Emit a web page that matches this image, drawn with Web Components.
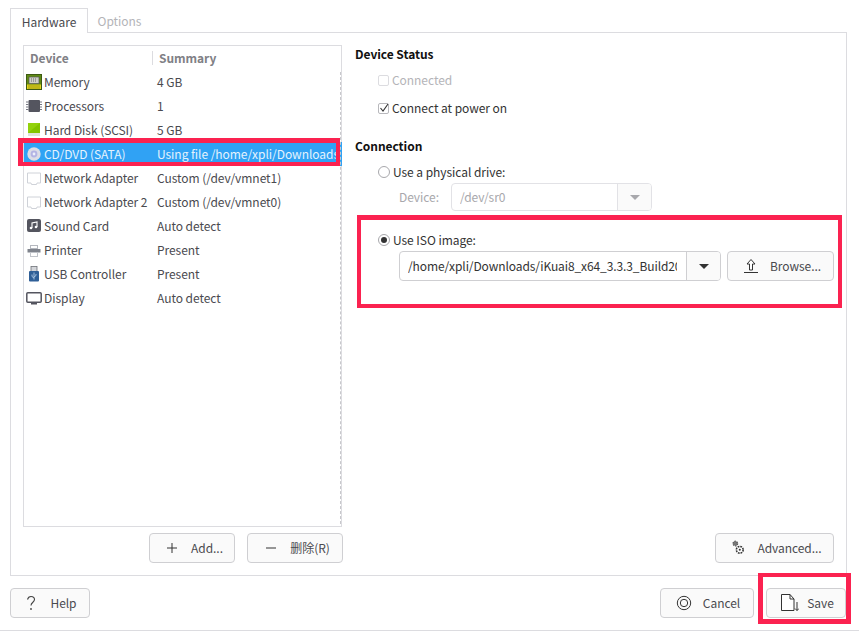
<!DOCTYPE html>
<html>
<head>
<meta charset="utf-8">
<title>Virtual Machine Settings</title>
<style>
  html, body { margin: 0; padding: 0; background: #fff; }
  body { font: 12px/18px "Noto Sans CJK SC", "Noto Sans", sans-serif; letter-spacing: -0.05px; color: #4a4a4f; }
</style>
</head>
<body>
<template id="icons">
  <svg data-i="memory" viewBox="0 0 16 16"><rect x=".5" y=".5" width="15" height="15" fill="#5f8a14" stroke="#3d5a12"/><rect x="1" y="10.500" width="14" height="4.500" fill="#e3d51c"/><path d="M3 10.500v4.500M5 10.500v4.500M7 10.500v4.500M9 10.500v4.500M11 10.500v4.500M13 10.500v4.500" stroke="#8c8a12" stroke-width=".8"/><rect x="3" y="3" width="10" height="6.500" fill="#cfcfc8" stroke="#555" stroke-width=".7"/><path d="M5 5h6M5 7h6" stroke="#666" stroke-dasharray="1 1"/></svg>
  <svg data-i="cpu" viewBox="0 0 16 16"><rect x="2.500" y="2" width="11.500" height="12" rx="1" fill="#54555f"/><path d="M0 4h2.500M0 6.500h2.500M0 9h2.500M0 11.500h2.500M14 4h2M14 6.500h2M14 9h2M14 11.500h2" stroke="#777882"/></svg>
  <svg data-i="disk" viewBox="0 0 16 16"><rect x="2" y="1" width="12" height="10" fill="#83c400"/><path d="M2 1h12L2 11z" fill="#93d20c"/><rect x="2" y="11" width="12" height="3" fill="#dfe3dd"/></svg>
  <svg data-i="cd" viewBox="0 0 16 16"><circle cx="8" cy="8" r="6.700" fill="#dcdde6"/><circle cx="8" cy="8" r="3.400" fill="#b4b4e4"/><circle cx="8" cy="8" r="1.400" fill="#eef0fa"/></svg>
  <svg data-i="net" viewBox="0 0 16 16"><path d="M1.500 3h13v10h-3.500l-.5 1.500h-5l-.5-1.500H1.500z" fill="#fff" stroke="#cfd2d8"/></svg>
  <svg data-i="sound" viewBox="0 0 16 16"><rect x="1" y="1" width="14" height="13" rx="2" fill="#54555f"/><path d="M6 10V5l5-1v5" fill="none" stroke="#fff" stroke-width="1.100"/><circle cx="5" cy="10" r="1.300" fill="#fff"/><circle cx="10" cy="9" r="1.300" fill="#fff"/></svg>
  <svg data-i="printer" viewBox="0 0 16 16"><rect x="4.500" y="3.500" width="7" height="3" fill="#fff" stroke="#b5b8bf"/><rect x="1.500" y="7" width="13" height="3.500" fill="#7f838c"/><rect x="4.500" y="10.500" width="7" height="4" fill="#fff" stroke="#c2c5cb"/></svg>
  <svg data-i="usb" viewBox="0 0 16 16"><rect x="5" y=".5" width="6" height="5" fill="#d4d6da" stroke="#6e7278" stroke-width=".8"/><rect x="3" y="5" width="10" height="10.500" rx="1" fill="#2f5f97"/><path d="M8 6.500v7M6 8.500v2l2 1.500M10 8v1.500l-2 1.500" fill="none" stroke="#bcd4ee" stroke-width=".8"/></svg>
  <svg data-i="display" viewBox="0 0 16 16"><rect x=".8" y="2.800" width="14.400" height="9.500" rx="1" fill="#fff" stroke="#54555f" stroke-width="1.500"/><rect x="5" y="13" width="6" height="1.500" fill="#54555f"/></svg>
  <svg data-i="plus" viewBox="0 0 16 16"><path d="M8 3v10M3 8h10" stroke="#333" fill="none"/></svg>
  <svg data-i="minus" viewBox="0 0 16 16"><path d="M3 8h10" stroke="#333" fill="none"/></svg>
  <svg data-i="upload" viewBox="0 0 16 16"><path d="M8 1.500l4 4.500H9.500v6h-3V6H4z" fill="#fff" stroke="#333"/><path d="M1 14.500h14" stroke="#333"/></svg>
  <svg data-i="help" viewBox="0 0 16 16"><path d="M4.500 4.500C5 2.600 6.400 1.500 8 1.500c2 0 3.500 1.300 3.500 3.100 0 2.600-3.500 2.800-3.500 6" fill="none" stroke="#444" stroke-width="1.100"/><circle cx="8" cy="14" r=".9" fill="#444"/></svg>
  <svg data-i="cancel" viewBox="0 0 16 16"><circle cx="8" cy="8" r="6.700" fill="none" stroke="#333"/><circle cx="8" cy="8" r="3.700" fill="none" stroke="#333"/></svg>
  <svg data-i="save" viewBox="0 0 18 18"><path d="M.5 .5h8.500l4 4.500v11.500H.5z" fill="#fff" stroke="#333"/><path d="M9 .5v4.500h4" fill="none" stroke="#333"/><path d="M16 8v8.500M14 14.500l2 2 2-2" fill="none" stroke="#333"/></svg>
  <svg data-i="gears" viewBox="0 0 16 18"><circle cx="5" cy="4" r="2.600" fill="#777" stroke="#555" stroke-width="1.400" stroke-dasharray="1.500 1"/><circle cx="10" cy="11" r="3.800" fill="#fff" stroke="#333" stroke-width="1.800" stroke-dasharray="2 1"/><circle cx="10" cy="11" r="1.200" fill="#333"/></svg>
</template>

<vm-dialog>
  <vm-tabs first="Hardware" second="Options">
    <div slot="left">
      <device-list>
        <device-row icon="memory" name="Memory" summary="4 GB"></device-row>
        <device-row icon="cpu" name="Processors" summary="1"></device-row>
        <device-row icon="disk" name="Hard Disk (SCSI)" summary="5 GB"></device-row>
        <device-row icon="cd" name="CD/DVD (SATA)" summary="Using file /home/xpli/Downloads" selected></device-row>
        <device-row icon="net" name="Network Adapter" summary="Custom (/dev/vmnet1)"></device-row>
        <device-row icon="net" name="Network Adapter 2" summary="Custom (/dev/vmnet0)"></device-row>
        <device-row icon="sound" name="Sound Card" summary="Auto detect"></device-row>
        <device-row icon="printer" name="Printer" summary="Present"></device-row>
        <device-row icon="usb" name="USB Controller" summary="Present"></device-row>
        <device-row icon="display" name="Display" summary="Auto detect"></device-row>
      </device-list>
      <button-row class="over">
        <vm-button icon="plus" width="86" shift="3" label="Add..."></vm-button>
        <vm-button icon="minus" width="96" shift="3" label="删除(R)"></vm-button>
      </button-row>
    </div>
    <div slot="right">
      <settings-pane></settings-pane>
      <button-row>
        <vm-button icon="gears" width="119" shift="3" label="Advanced..."></vm-button>
      </button-row>
    </div>
  </vm-tabs>
  <dialog-footer>
    <vm-button slot="start" icon="help" width="80" label="Help"></vm-button>
    <vm-button slot="end" icon="cancel" width="94" shift="2" label="Cancel"></vm-button>
    <vm-button slot="end" icon="save" wide width="80" shift="3" label="Save"></vm-button>
  </dialog-footer>
  <mark-box x="18" y="138" w="322" h="28" b="5px 4px 4px 5px"></mark-box>
  <mark-box x="357" y="215" w="485" h="93" b="5px 4px 4px 4px"></mark-box>
  <mark-box x="758" y="573" w="93" h="51" b="4px 5px 5px 5px"></mark-box>
</vm-dialog>

<script>
const iconSource = document.getElementById('icons').content

function iconMarkup (name) {
  const svg = iconSource.querySelector(`[data-i="${name}"]`)
  return svg ? svg.outerHTML : ''
}

class VmDialog extends HTMLElement {
  constructor () {
    super()
    this.attachShadow({ mode: 'open' }).innerHTML = `
      <style>
        :host { display: flex; flex-direction: column; position: relative; box-sizing: border-box;
          width: 859px; height: 631px; padding: 8px 12px 0 10px; border-bottom: 1px solid #dcdce0; }
      </style>
      <slot></slot>`
  }
}

class VmTabs extends HTMLElement {
  constructor () {
    super()
    this.attachShadow({ mode: 'open' }).innerHTML = `
      <style>
        :host { display: block; }
        .bar { display: flex; height: 24px; align-items: stretch; }
        .tab { box-sizing: border-box; height: 25px; padding: 4px 0 0; text-align: center; }
        .on { width: 78px; border: 1px solid #dcdce0; border-bottom: 0; background: #fff; position: relative; z-index: 1; color: #4a4a4f; }
        .off { width: 63px; color: #b4b4b8; }
        .pane { box-sizing: border-box; height: 544px; display: grid; grid-template-columns: 319px 479px; column-gap: 13px;
          padding: 12px 12px 12px 12px; border: 1px solid #dcdce0; }
        ::slotted(div) { display: flex; flex-direction: column; min-height: 0; }
      </style>
      <div class="bar">
        <div class="tab on">${this.getAttribute('first')}</div>
        <div class="tab off">${this.getAttribute('second')}</div>
      </div>
      <div class="pane"><slot name="left"></slot><slot name="right"></slot></div>`
  }
}

class DeviceList extends HTMLElement {
  constructor () {
    super()
    this.attachShadow({ mode: 'open' }).innerHTML = `
      <style>
        :host { display: block; box-sizing: border-box; height: 482px; border: 1px solid #dcdce0; position: relative; }
        .head { display: flex; height: 24px; align-items: center; font-weight: 700; color: #808085; }
        .device { box-sizing: border-box; width: 129px; padding-left: 6px; height: 14px; line-height: 14px; border-right: 1px solid #dcdce0; }
        .summary { padding-left: 6px; }
        .scroll { position: absolute; right: 0; top: 26px; bottom: 2px; border-right: 1px dashed #c8c8cc; }
      </style>
      <div class="head"><div class="device">Device</div><div class="summary">Summary</div></div>
      <slot></slot>
      <div class="scroll"></div>`
  }
}

class DeviceRow extends HTMLElement {
  constructor () {
    super()
    this.attachShadow({ mode: 'open' }).innerHTML = `
      <style>
        :host { display: flex; align-items: center; height: 24px; color: #4a4a4f; white-space: nowrap; }
        :host([selected]) { background: #30a2f4; color: #e4f2fd; width: 318px; }
        .icon { flex: none; width: 16px; height: 16px; margin: 0 2px 0 2px; }
        .icon svg { display: block; width: 16px; height: 16px; }
        .name { width: 113px; flex: none; }
        .summary { width: 184px; }
      </style>
      <div class="icon">${iconMarkup(this.getAttribute('icon'))}</div>
      <div class="name">${this.getAttribute('name')}</div>
      <div class="summary">${this.getAttribute('summary')}</div>`
  }
}

class ButtonRow extends HTMLElement {
  constructor () {
    super()
    this.attachShadow({ mode: 'open' }).innerHTML = `
      <style>
        :host { display: flex; justify-content: flex-end; gap: 12px; margin-top: 6px; }
        :host(.over) { margin-right: -1px; }
      </style>
      <slot></slot>`
  }
}

class VmButton extends HTMLElement {
  constructor () {
    super()
    const shift = this.getAttribute('shift') || 0
    this.attachShadow({ mode: 'open' }).innerHTML = `
      <style>
        :host { display: flex; box-sizing: border-box; height: 30px; padding-left: ${shift}px; align-items: center; justify-content: center; gap: 11px;
          width: ${this.getAttribute('width')}px; flex: none; border: 1px solid #cfcfd2; border-radius: 4px; background: #fafafa; color: #4a4a4f; white-space: nowrap; }
        svg { display: block; width: 16px; height: 16px; }
        :host([wide]) svg { width: 18px; height: 18px; }
        :host([wide]) { gap: 8px; }
      </style>
      ${iconMarkup(this.getAttribute('icon'))}<span>${this.getAttribute('label')}</span>`
  }
}

class VmCheck extends HTMLElement {
  constructor () {
    super()
    this.attachShadow({ mode: 'open' }).innerHTML = `
      <style>
        :host { display: flex; align-items: center; height: 28px; padding-left: 23px; gap: 3px; color: #333; }
        :host([disabled]) { color: #b4b4b8; }
        .box { box-sizing: border-box; width: 11px; height: 11px; border: 1px solid #b8b8bc; border-radius: 2px; position: relative; }
        :host([disabled]) .box { border-color: #dcdce0; }
        svg { position: absolute; left: 0; top: -1px; width: 10px; height: 10px; }
      </style>
      <div class="box">${this.hasAttribute('checked') ? '<svg viewBox="0 0 10 10"><path d="M1.500 5l2.500 3 5-7" fill="none" stroke="#333" stroke-width="1.100"/></svg>' : ''}</div>
      <slot></slot>`
  }
}

class VmRadio extends HTMLElement {
  constructor () {
    super()
    this.attachShadow({ mode: 'open' }).innerHTML = `
      <style>
        :host { display: flex; align-items: center; height: 28px; padding-left: 23px; gap: 3px; color: #333; }
        .dot { box-sizing: border-box; width: 12px; height: 12px; border: 1px solid #a8a8ac; border-radius: 50%; display: flex; align-items: center; justify-content: center; }
        .dot i { width: 6px; height: 6px; border-radius: 50%; background: #333; }
      </style>
      <div class="dot">${this.hasAttribute('checked') ? '<i></i>' : ''}</div>
      <slot></slot>`
  }
}

class VmCombo extends HTMLElement {
  constructor () {
    super()
    this.attachShadow({ mode: 'open' }).innerHTML = `
      <style>
        :host { display: flex; box-sizing: border-box; height: 30px; border: 1px solid #cfcfd2; border-radius: 4px; background: #fff; color: #333; overflow: hidden; }
        :host([disabled]) { height: 28px; border-color: #e2e2e6; color: #a8a8ac; }
        .text { flex: 1; min-width: 0; margin: 0 9px 0 8px; align-self: center; white-space: nowrap; overflow: hidden; letter-spacing: -0.1px; }
        .arrow { flex: none; width: 33px; border-left: 1px solid #cfcfd2; background: #fafafa; display: flex; align-items: center; justify-content: center; }
        :host([disabled]) .arrow { border-left-color: #e2e2e6; }
        .arrow i { width: 0; height: 0; border: 5px solid transparent; border-top: 5px solid #333; border-bottom: 0; }
        :host([disabled]) .arrow i { border-top-color: #a8a8ac; }
      </style>
      <div class="text"><slot></slot></div>
      <div class="arrow"><i></i></div>`
  }
}

class SettingsPane extends HTMLElement {
  constructor () {
    super()
    this.attachShadow({ mode: 'open' }).innerHTML = `
      <style>
        :host { display: flex; flex-direction: column; flex: 1; }
        h3 { margin: 0; height: 20px; font-size: 12px; line-height: 20px; font-weight: 700; color: #111; }
        .status { margin-top: -1px; }
        .gap { height: 2px; flex: none; }
        .connection { margin-top: 14px; }
        .physical { margin-top: 2px; }
        .device { display: flex; align-items: center; margin: -3px 0 0 44px; height: 28px; color: #a8a8ac; }
        .device span { width: 52px; }
        .device vm-combo { width: 201px; }
        .iso { margin-top: 15px; }
        .iso-row { display: flex; margin: -3px 0 0 44px; gap: 6px; }
        .iso-row vm-combo { width: 322px; }
        .rest { flex: 1; }
      </style>
      <h3 class="status">Device Status</h3>
      <div class="gap"></div>
      <vm-check disabled>Connected</vm-check>
      <vm-check checked>Connect at power on</vm-check>
      <h3 class="connection">Connection</h3>
      <vm-radio class="physical">Use a physical drive:</vm-radio>
      <div class="device"><span>Device:</span><vm-combo disabled>/dev/sr0</vm-combo></div>
      <vm-radio class="iso" checked>Use ISO image:</vm-radio>
      <div class="iso-row">
        <vm-combo>/home/xpli/Downloads/iKuai8_x64_3.3.3_Build2020</vm-combo>
        <vm-button icon="upload" width="107" shift="3" label="Browse..."></vm-button>
      </div>
      <div class="rest"></div>`
  }
}

class DialogFooter extends HTMLElement {
  constructor () {
    super()
    this.attachShadow({ mode: 'open' }).innerHTML = `
      <style>
        :host { display: flex; justify-content: space-between; margin-top: 12px; margin-right: 1px; }
        .end { display: flex; gap: 12px; }
      </style>
      <slot name="start"></slot>
      <div class="end"><slot name="end"></slot></div>`
  }
}

// annotation rectangles drawn over the finished dialog
class MarkBox extends HTMLElement {
  constructor () {
    super()
    const a = (n) => this.getAttribute(n)
    this.attachShadow({ mode: 'open' }).innerHTML = `
      <style>
        :host { position: absolute; box-sizing: border-box; left: ${a('x')}px; top: ${a('y')}px; width: ${a('w')}px; height: ${a('h')}px;
          border: solid #fb2250; border-width: ${a('b')}; pointer-events: none; }
      </style>`
  }
}

customElements.define('vm-dialog', VmDialog)
customElements.define('vm-tabs', VmTabs)
customElements.define('device-list', DeviceList)
customElements.define('device-row', DeviceRow)
customElements.define('button-row', ButtonRow)
customElements.define('vm-button', VmButton)
customElements.define('vm-check', VmCheck)
customElements.define('vm-radio', VmRadio)
customElements.define('vm-combo', VmCombo)
customElements.define('settings-pane', SettingsPane)
customElements.define('dialog-footer', DialogFooter)
customElements.define('mark-box', MarkBox)
</script>
</body>
</html>
